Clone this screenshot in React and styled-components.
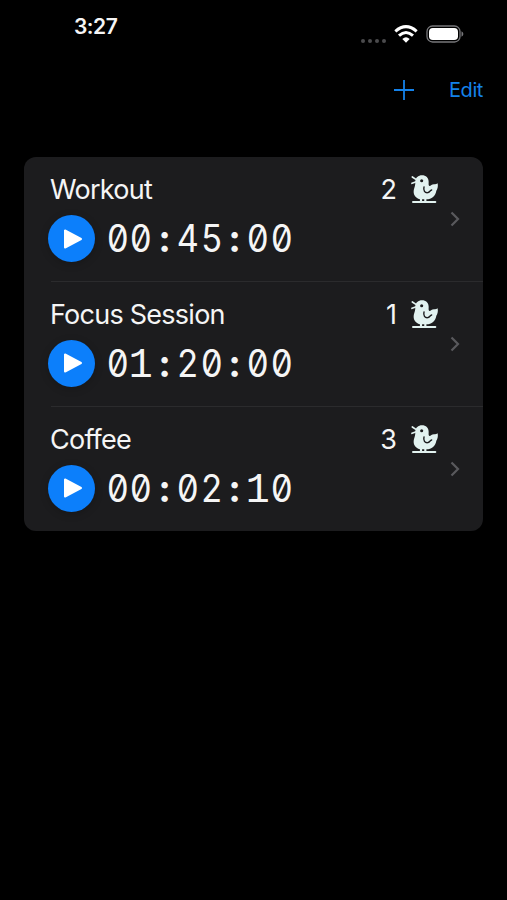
import styled, { createGlobalStyle } from "styled-components";

const timers = [
  { name: "Workout", time: "00:45:00", count: 2 },
  { name: "Focus Session", time: "01:20:00", count: 1 },
  { name: "Coffee", time: "00:02:10", count: 3 },
];

const Bird = () => (
  <svg width="28" height="29" viewBox="0 0 84 87">
    <path
      d="M13 20C13 8 22 1 33 1C45 1 53 9 53 20C53 26 52 30 55 33C60 33 62 28 69 28C74 28 77 27 80 25C82 36 79 43 76 47C74 62 62 73 46 73H33C16 73 7 61 8 48C9 39 13 34 13 20Z"
      fill="#e2f2f0"
    />
    <path
      d="M4 6L16 14M3 25L16 20"
      stroke="#e2f2f0"
      strokeWidth="5"
      strokeLinecap="round"
    />
    <circle cx="32" cy="17" r="4.6" fill="#1c1c1e" />
    <path
      d="M39 36C36 47 42 54 50 53C56 52 57 46 62 45"
      fill="none"
      stroke="#1c1c1e"
      strokeWidth="4.2"
      strokeLinecap="round"
    />
    <path d="M30 70V80M43 70V80" stroke="#e2f2f0" strokeWidth="6.5" />
    <path
      d="M6 81H73"
      stroke="#e2f2f0"
      strokeWidth="6"
      strokeLinecap="round"
    />
  </svg>
);

const App = () => {
  return (
    <Screen>
      <GlobalStyle />
      <StatusBar>
        <Clock>3:27</Clock>
        <StatusIcons>
          <Signal>
            <Dot />
            <Dot />
            <Dot />
            <Dot />
          </Signal>
          <svg width="24" height="18" viewBox="0 0 72 54">
            <g fill="none" stroke="#fff" strokeWidth="9">
              <path d="M4 19Q36-9 68 19" />
              <path d="M15 32Q36 13 57 32" />
            </g>
            <path d="M25 42Q36 32 47 42L36 53Z" fill="#fff" />
          </svg>
          <svg width="38" height="18" viewBox="0 0 38 18">
            <rect
              x="1"
              y="1"
              width="33"
              height="16"
              rx="5.5"
              fill="none"
              stroke="#77777a"
              strokeWidth="1.3"
            />
            <rect x="3" y="3" width="29" height="12" rx="3.8" fill="#fff" />
            <path d="M35.5 6.2Q37.4 7.2 37.4 9T35.5 11.8Z" fill="#77777a" />
          </svg>
        </StatusIcons>
      </StatusBar>
      <Toolbar>
        <AddButton>
          <svg width="22" height="22" viewBox="0 0 22 22">
            <path d="M11 1V21M1 11H21" stroke="#1482ea" strokeWidth="1.8" />
          </svg>
        </AddButton>
        <EditButton>Edit</EditButton>
      </Toolbar>
      <List>
        {timers.map((timer) => (
          <Row key={timer.name}>
            <Details>
              <Heading>
                <Title>{timer.name}</Title>
                <Count>{timer.count}</Count>
                <Bird />
              </Heading>
              <Controls>
                <PlayButton>
                  <svg width="20" height="22" viewBox="0 0 20 22">
                    <path
                      d="M2 2.5V19.5L18 11Z"
                      fill="#fff"
                      stroke="#fff"
                      strokeWidth="2"
                      strokeLinejoin="round"
                    />
                  </svg>
                </PlayButton>
                <Time>
                  {timer.time.split("").map((char, i) => {
                    if (char === ":") return <Colon key={i}>:</Colon>;
                    if (char === "1") return <One key={i}>1</One>;
                    return <Digit key={i}>{char}</Digit>;
                  })}
                </Time>
              </Controls>
            </Details>
            <Chevron>
              <svg width="10" height="16" viewBox="0 0 10 16">
                <path
                  d="M1.5 1.5L8 8L1.5 14.5"
                  fill="none"
                  stroke="#59595d"
                  strokeWidth="2.2"
                />
              </svg>
            </Chevron>
          </Row>
        ))}
      </List>
    </Screen>
  );
};

const GlobalStyle = createGlobalStyle`
  * {
    box-sizing: border-box;
  }

  body {
    margin: 0;
    background: #000;
    font-family: Inter, "Liberation Sans", sans-serif;
  }

  svg {
    display: block;
    flex-shrink: 0;
  }
`;

const Screen = styled.main`
  width: 100%;
  height: 100vh;
  overflow: hidden;
  background: #000;
  color: #f5f5f5;
`;

const StatusBar = styled.header`
  display: flex;
  justify-content: space-between;
  height: 60px;
  padding: 14px 43px 0 74px;
`;

const Clock = styled.span`
  font-size: 21px;
  font-weight: 600;
  line-height: 26px;
  letter-spacing: -0.5px;
`;

const StatusIcons = styled.div`
  display: flex;
  align-items: center;
  gap: 8px;
  height: 18px;
  margin-top: 11px;
`;

const Signal = styled.div`
  display: flex;
  gap: 3px;
  margin-top: 13px;
`;

const Dot = styled.span`
  width: 4px;
  height: 4px;
  border-radius: 50%;
  background: #4b4b4d;
`;

const Toolbar = styled.nav`
  display: flex;
  align-items: center;
  justify-content: flex-end;
  height: 60px;
  padding-right: 24px;
  gap: 34px;
`;

const AddButton = styled.button`
  padding: 0;
  border: 0;
  background: none;
`;

const EditButton = styled.button`
  padding: 0;
  border: 0;
  background: none;
  color: #1482ea;
  font: 400 20px Inter, sans-serif;
  letter-spacing: -0.4px;
`;

const List = styled.ul`
  margin: 37px 24px 0;
  padding: 0;
  border-radius: 12px;
  background: #1c1c1e;
  list-style: none;
  overflow: hidden;
`;

const Row = styled.li`
  display: flex;
  height: 124.8px;
  margin-left: 27px;
  border-bottom: 1px solid #2b2b2d;

  &:last-child {
    height: 124px;
    border-bottom: 0;
  }
`;

const Details = styled.div`
  flex: 1;
  padding-top: 16px;
`;

const Heading = styled.div`
  display: flex;
  align-items: center;
  height: 33px;
`;

const Title = styled.span`
  flex: 1;
  margin-left: -1px;
  font-size: 27px;
  letter-spacing: -0.75px;
`;

const Count = styled.span`
  margin-right: 14px;
  font-size: 27px;
`;

const Controls = styled.div`
  display: flex;
  align-items: center;
  height: 47px;
  margin: 9px 0 0 -3px;
`;

const PlayButton = styled.button`
  display: flex;
  align-items: center;
  justify-content: center;
  width: 47px;
  height: 47px;
  padding: 0 0 0 2px;
  border: 0;
  border-radius: 50%;
  background: #0c7ffb;
  box-shadow: 0 2px 8px rgba(0, 0, 0, 0.2);
`;

const Time = styled.div`
  display: flex;
  height: 47px;
  margin-left: 11px;
  font-size: 38px;
  line-height: 47px;
  font-feature-settings: "zero" 1;
`;

const Digit = styled.span`
  display: flex;
  justify-content: center;
  width: 23.4px;
  transform: scaleX(0.9);
`;

const Colon = styled(Digit)`
  font-weight: 700;
  transform: none;
`;

/* the footed 1 only exists in the mono face */
const One = styled(Digit)`
  font-family: "Liberation Mono", monospace;
  font-size: 42px;
  line-height: 52px;
  transform: scaleX(0.95);
`;

const Chevron = styled.div`
  display: flex;
  align-items: center;
  width: 44px;
  padding-left: 11px;
`;

export default App;
